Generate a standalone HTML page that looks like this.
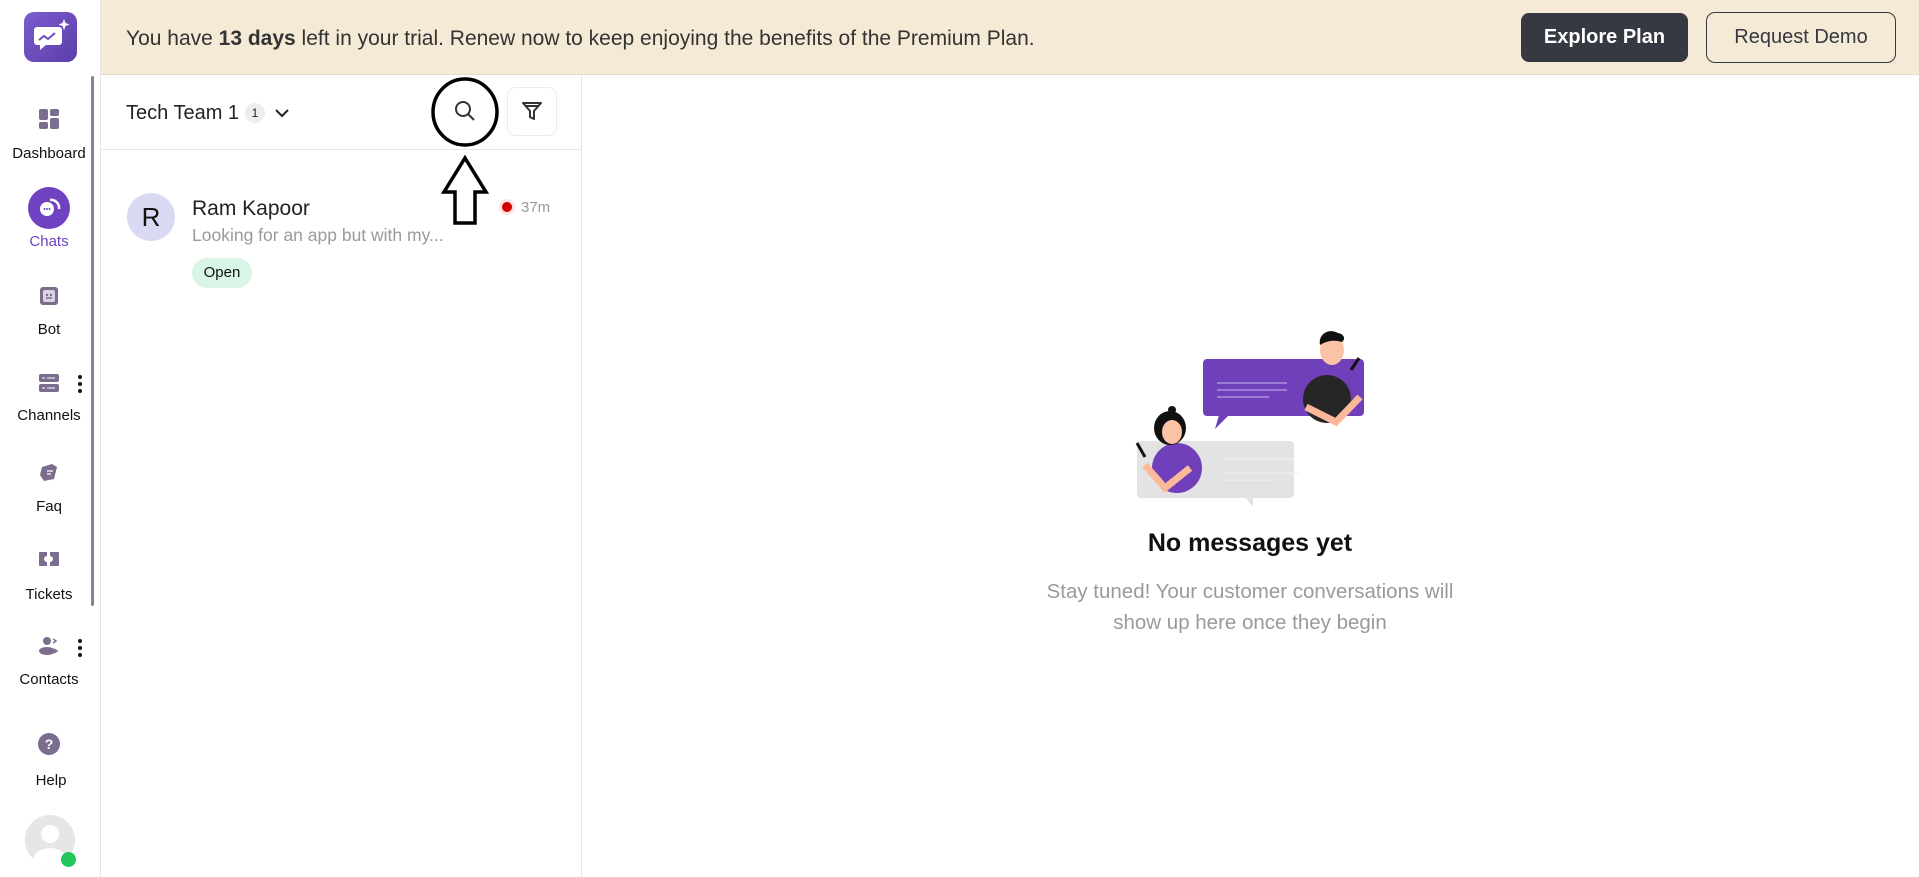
<!DOCTYPE html>
<html><head><meta charset="utf-8">
<style>
*{box-sizing:border-box;margin:0;padding:0}
body{width:1919px;height:877px;overflow:hidden;background:#fff;font-family:"Liberation Sans",sans-serif;position:relative;color:#222}
.abs{position:absolute}
.banner{left:101px;top:0;width:1818px;height:75px;background:#f5ead5;border-bottom:1px solid #e8dcc4}
.sb{left:0;top:0;width:101px;height:877px;border-right:1px solid #e6e6e6;background:#fff}
.nav{position:absolute;left:0;width:98px;text-align:center;font-size:15px;color:#111}
.ic{position:absolute;left:49px;transform:translate(-50%,-50%)}
.dots{position:absolute;left:78px;width:4px}
.dots i{display:block;width:4px;height:4px;border-radius:2px;background:#111;margin-bottom:3px}
</style></head><body>
<div class="abs sb"></div>
<div class="abs" style="left:24px;top:12px;width:53px;height:50px;border-radius:10px;background:linear-gradient(135deg,#7d5ccf,#5b3ea8)">
<svg width="53" height="50" viewBox="0 0 53 50"><path d="M13 15h22a3 3 0 0 1 3 3v12a3 3 0 0 1-3 3H22l-6 5v-5h-3a3 3 0 0 1-3-3V18a3 3 0 0 1 3-3z" fill="#fff"/><path d="M15 28l5-4 4 3 7-6" stroke="#6a4cbf" stroke-width="2" fill="none"/><path d="M40 7l1.5 4 4 1.5-4 1.5-1.5 4-1.5-4-4-1.5 4-1.5z" fill="#fff"/></svg></div>
<div class="abs" style="left:91px;top:76px;width:3px;height:530px;background:#7a8898;border-radius:2px"></div>
<svg class="ic" style="top:119px" width="22" height="22" viewBox="0 0 22 22" fill="#7b6d8d"><rect x="1" y="1" width="9" height="11" rx="2"/><rect x="12" y="1" width="9" height="7" rx="2"/><rect x="1" y="14" width="9" height="7" rx="2"/><rect x="12" y="10" width="9" height="11" rx="2"/></svg>
<div class="nav" style="top:145px">Dashboard</div>
<div class="ic" style="top:208px;width:42px;height:42px;border-radius:50%;background:#6f42c1"><svg width="42" height="42" viewBox="0 0 42 42"><circle cx="19" cy="22" r="7" fill="#fff"/><path d="M22 13a8 8 0 0 1 9 9" stroke="#fff" stroke-width="2.5" fill="none"/><circle cx="16.5" cy="22" r="1" fill="#6f42c1"/><circle cx="19" cy="22" r="1" fill="#6f42c1"/><circle cx="21.5" cy="22" r="1" fill="#6f42c1"/></svg></div>
<div class="nav" style="top:233px;color:#6f42c1">Chats</div>
<svg class="ic" style="top:296px" width="22" height="22" viewBox="0 0 22 22"><rect x="2" y="2" width="18" height="18" rx="3" fill="#7b6d8d"/><rect x="5" y="5" width="12" height="12" rx="2" fill="#d9d4e2"/><circle cx="9" cy="10" r="1.2" fill="#7b6d8d"/><circle cx="13" cy="10" r="1.2" fill="#7b6d8d"/><path d="M8 13h6" stroke="#7b6d8d" stroke-width="1.5"/></svg>
<div class="nav" style="top:321px">Bot</div>
<svg class="ic" style="top:383px" width="22" height="20" viewBox="0 0 22 20" fill="#7b6d8d"><rect x="1" y="1" width="20" height="8" rx="2"/><rect x="1" y="11" width="20" height="8" rx="2"/><path d="M4 5h3M9 5h8M4 15h3M9 15h8" stroke="#fff" stroke-width="1"/></svg>
<div class="dots" style="top:375px"><i></i><i></i><i></i></div>
<div class="nav" style="top:407px">Channels</div>
<svg class="ic" style="top:472px" width="22" height="22" viewBox="0 0 22 22" fill="#7b6d8d"><path d="M4 6l10-3 5 3-3 12-10 2-4-6z"/><path d="M9 10h6M9 13h4" stroke="#fff" stroke-width="1.3"/></svg>
<div class="nav" style="top:498px">Faq</div>
<svg class="ic" style="top:559px" width="22" height="18" viewBox="0 0 22 18" fill="#7b6d8d"><path d="M2 2h7v4a2 2 0 0 0 0 6v4H2a1 1 0 0 1-1-1V3a1 1 0 0 1 1-1zM12 2h8a1 1 0 0 1 1 1v12a1 1 0 0 1-1 1h-8v-4a2 2 0 0 0 0-6z"/></svg>
<div class="nav" style="top:586px">Tickets</div>
<svg class="ic" style="top:646px" width="22" height="20" viewBox="0 0 22 20" fill="#7b6d8d"><circle cx="9" cy="5" r="4"/><ellipse cx="9" cy="15" rx="8" ry="4"/><path d="M15 3l3 2-3 2M16 13l3 2-3 2" stroke="#7b6d8d" stroke-width="1.5" fill="none"/></svg>
<div class="dots" style="top:639px"><i></i><i></i><i></i></div>
<div class="nav" style="top:671px">Contacts</div>
<div class="ic" style="top:744px;width:22px;height:22px;border-radius:50%;background:#7b6d8d;color:#fff;font-weight:bold;font-size:14px;text-align:center;line-height:22px">?</div>
<div class="nav" style="top:772px;left:2px">Help</div>
<div class="abs" style="left:25px;top:815px;width:50px;height:50px;border-radius:50%;background:#e6e6e6;overflow:hidden"><svg width="50" height="50"><circle cx="25" cy="19" r="9" fill="#fff"/><ellipse cx="25" cy="46" rx="17" ry="13" fill="#fff"/></svg></div>
<div class="abs" style="left:61px;top:852px;width:15px;height:15px;border-radius:50%;background:#22c55e"></div>

<div class="abs banner"></div>
<div class="abs" style="left:126px;top:27px;font-size:21px;color:#333">You have <b>13 days</b> left in your trial. Renew now to keep enjoying the benefits of the Premium Plan.</div>
<div class="abs" style="left:1521px;top:13px;width:167px;height:49px;border-radius:8px;background:#363842;color:#fff;font-weight:bold;font-size:20px;text-align:center;line-height:49px">Explore Plan</div>
<div class="abs" style="left:1706px;top:12px;width:190px;height:51px;border-radius:9px;border:1.5px solid #363842;color:#363842;font-size:20px;text-align:center;line-height:48px">Request Demo</div>

<div class="abs" style="left:581px;top:75px;width:1px;height:802px;background:#e6e6e6"></div>
<div class="abs" style="left:101px;top:149px;width:480px;height:1px;background:#e6e6e6"></div>
<div class="abs" style="left:126px;top:102px;font-size:20px;color:#222">Tech Team 1</div>
<div class="abs" style="left:245px;top:103px;width:20px;height:20px;border-radius:50%;background:#eee;font-size:12px;text-align:center;line-height:20px">1</div>
<svg class="abs" style="left:274px;top:107px" width="16" height="12"><path d="M2 3l6 6 6-6" stroke="#222" stroke-width="2" fill="none"/></svg>
<svg class="abs" style="left:453px;top:99px" width="24" height="24" viewBox="0 0 24 24"><circle cx="10" cy="10" r="7" stroke="#333" stroke-width="2" fill="none"/><path d="M15 15l6 6" stroke="#333" stroke-width="2"/></svg>
<svg class="abs" style="left:428px;top:76px" width="76" height="74"><ellipse cx="37" cy="36" rx="32" ry="33" stroke="#000" stroke-width="3.5" fill="none"/></svg>
<div class="abs" style="left:507px;top:87px;width:50px;height:49px;border:1px solid #ebebeb;border-radius:9px"></div>
<svg class="abs" style="left:520px;top:99px" width="24" height="24" viewBox="0 0 24 24"><path d="M3 4h18l-7 8v8l-4-2v-6z M5 7h14" stroke="#333" stroke-width="2" fill="none" stroke-linejoin="round"/></svg>
<svg class="abs" style="left:440px;top:154px" width="50" height="74"><path d="M25 4L46 38H35V69H15V38H4Z" stroke="#000" stroke-width="3.5" fill="#fff"/></svg>

<div class="abs" style="left:127px;top:193px;width:48px;height:48px;border-radius:50%;background:#d9d9f3;font-size:26px;text-align:center;line-height:48px;color:#111">R</div>
<div class="abs" style="left:192px;top:197px;font-size:21px;color:#222">Ram Kapoor</div>
<div class="abs" style="left:192px;top:225px;font-size:17.5px;color:#9a9a9a">Looking for an app but with my...</div>
<div class="abs" style="left:192px;top:258px;width:60px;height:30px;border-radius:15px;background:#d9f5e5;font-size:15px;text-align:center;line-height:30px;color:#111">Open</div>
<div class="abs" style="left:499px;top:199px;width:16px;height:16px;border-radius:50%;background:#fde2e2"></div>
<div class="abs" style="left:502px;top:202px;width:10px;height:10px;border-radius:50%;background:#d10000"></div>
<div class="abs" style="left:521px;top:199px;font-size:15px;color:#999">37m</div>

<svg class="abs" style="left:1125px;top:315px" width="250" height="195" viewBox="0 0 250 195">
<rect x="78" y="44" width="161" height="57" rx="4" fill="#7040bb"/>
<path d="M94 100l-4 14 14-14z" fill="#7040bb"/>
<path d="M92 68h70M92 75h70M92 82h52" stroke="#c9b6ec" stroke-width="1"/>
<rect x="12" y="126" width="157" height="57" rx="4" fill="#e3e3e3"/>
<path d="M120 182l8 10v-10z" fill="#e3e3e3"/>
<path d="M100 144h70M98 158h76M98 165h52" stroke="#f2f2f2" stroke-width="1"/>
<circle cx="202" cy="84" r="24" fill="#262626"/>
<path d="M181 92l30 15 24-25" stroke="#fbb89a" stroke-width="7" fill="none"/>
<path d="M190 64h24v12h-24z" fill="#262626"/>
<ellipse cx="207" cy="35" rx="12" ry="15" fill="#fbc3a6"/>
<path d="M195 30c-2-12 10-17 18-12 6 1 8 6 4 9-6-2-14-2-22 3z" fill="#111"/>
<path d="M226 55l8-12" stroke="#111" stroke-width="3"/>
<circle cx="52" cy="153" r="25" fill="#7040bb"/>
<ellipse cx="45" cy="113" rx="16" ry="17" fill="#111"/>
<ellipse cx="47" cy="117" rx="10" ry="12" fill="#fbc3a6"/>
<circle cx="47" cy="95" r="4" fill="#111"/>
<path d="M20 150l20 23 25-20" stroke="#fbb89a" stroke-width="7" fill="none"/>
<path d="M12 128l8 14" stroke="#111" stroke-width="3"/>
</svg>
<div class="abs" style="left:1050px;top:529px;width:400px;text-align:center;font-size:25px;font-weight:bold;color:#111">No messages yet</div>
<div class="abs" style="left:1000px;top:576px;width:500px;text-align:center;font-size:20.5px;line-height:31px;color:#9a9a9a">Stay tuned! Your customer conversations will<br>show up here once they begin</div>
</body></html>
